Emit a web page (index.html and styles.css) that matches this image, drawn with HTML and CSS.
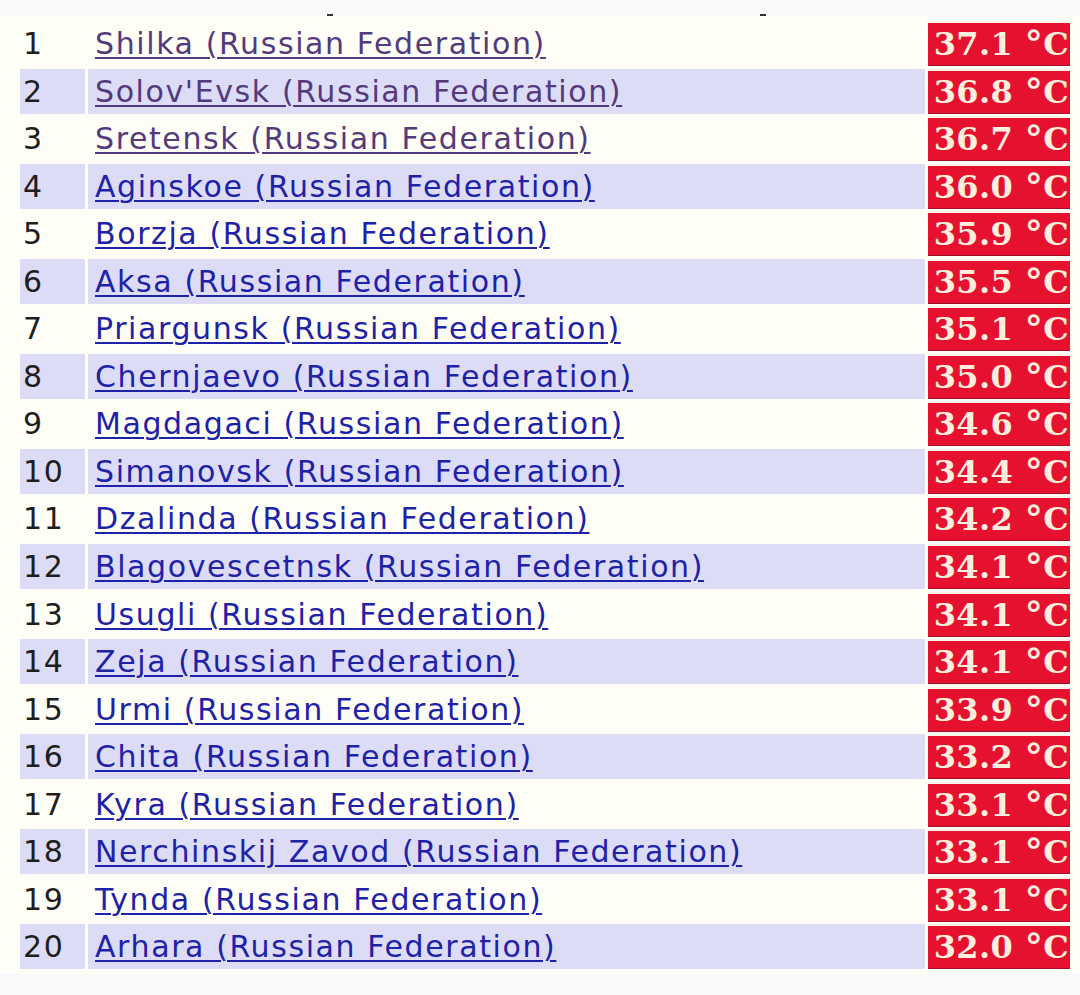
FILE: index.html
```html
<!DOCTYPE html>
<html>
<head>
<meta charset="utf-8">
<link rel="stylesheet" href="styles.css">
</head>
<body>
<div class="page">
  <div class="topstrip"><span class="mark m1"></span><span class="mark m2"></span></div>
  <div class="table">
    <div class="row odd"><div class="num">1</div><div class="name"><a class="visited" href="#">Shilka (Russian Federation)</a></div><div class="temp"><span>37.1 <span class="deg">°</span>C</span></div></div>
    <div class="row even"><div class="num">2</div><div class="name"><a class="visited" href="#">Solov'Evsk (Russian Federation)</a></div><div class="temp"><span>36.8 <span class="deg">°</span>C</span></div></div>
    <div class="row odd"><div class="num">3</div><div class="name"><a class="visited" href="#">Sretensk (Russian Federation)</a></div><div class="temp"><span>36.7 <span class="deg">°</span>C</span></div></div>
    <div class="row even"><div class="num">4</div><div class="name"><a href="#">Aginskoe (Russian Federation)</a></div><div class="temp"><span>36.0 <span class="deg">°</span>C</span></div></div>
    <div class="row odd"><div class="num">5</div><div class="name"><a href="#">Borzja (Russian Federation)</a></div><div class="temp"><span>35.9 <span class="deg">°</span>C</span></div></div>
    <div class="row even"><div class="num">6</div><div class="name"><a href="#">Aksa (Russian Federation)</a></div><div class="temp"><span>35.5 <span class="deg">°</span>C</span></div></div>
    <div class="row odd"><div class="num">7</div><div class="name"><a href="#">Priargunsk (Russian Federation)</a></div><div class="temp"><span>35.1 <span class="deg">°</span>C</span></div></div>
    <div class="row even"><div class="num">8</div><div class="name"><a href="#">Chernjaevo (Russian Federation)</a></div><div class="temp"><span>35.0 <span class="deg">°</span>C</span></div></div>
    <div class="row odd"><div class="num">9</div><div class="name"><a href="#">Magdagaci (Russian Federation)</a></div><div class="temp"><span>34.6 <span class="deg">°</span>C</span></div></div>
    <div class="row even"><div class="num">10</div><div class="name"><a href="#">Simanovsk (Russian Federation)</a></div><div class="temp"><span>34.4 <span class="deg">°</span>C</span></div></div>
    <div class="row odd"><div class="num">11</div><div class="name"><a href="#">Dzalinda (Russian Federation)</a></div><div class="temp"><span>34.2 <span class="deg">°</span>C</span></div></div>
    <div class="row even"><div class="num">12</div><div class="name"><a href="#">Blagovescetnsk (Russian Federation)</a></div><div class="temp"><span>34.1 <span class="deg">°</span>C</span></div></div>
    <div class="row odd"><div class="num">13</div><div class="name"><a href="#">Usugli (Russian Federation)</a></div><div class="temp"><span>34.1 <span class="deg">°</span>C</span></div></div>
    <div class="row even"><div class="num">14</div><div class="name"><a href="#">Zeja (Russian Federation)</a></div><div class="temp"><span>34.1 <span class="deg">°</span>C</span></div></div>
    <div class="row odd"><div class="num">15</div><div class="name"><a href="#">Urmi (Russian Federation)</a></div><div class="temp"><span>33.9 <span class="deg">°</span>C</span></div></div>
    <div class="row even"><div class="num">16</div><div class="name"><a href="#">Chita (Russian Federation)</a></div><div class="temp"><span>33.2 <span class="deg">°</span>C</span></div></div>
    <div class="row odd"><div class="num">17</div><div class="name"><a href="#">Kyra (Russian Federation)</a></div><div class="temp"><span>33.1 <span class="deg">°</span>C</span></div></div>
    <div class="row even"><div class="num">18</div><div class="name"><a href="#">Nerchinskij Zavod (Russian Federation)</a></div><div class="temp"><span>33.1 <span class="deg">°</span>C</span></div></div>
    <div class="row odd"><div class="num">19</div><div class="name"><a href="#">Tynda (Russian Federation)</a></div><div class="temp"><span>33.1 <span class="deg">°</span>C</span></div></div>
    <div class="row even"><div class="num">20</div><div class="name"><a href="#">Arhara (Russian Federation)</a></div><div class="temp"><span>32.0 <span class="deg">°</span>C</span></div></div>
  </div>
</div>
</body>
</html>
```

FILE: styles.css
```css
html, body {
  margin: 0;
  padding: 0;
  background: #f9f9f9;
}
.page {
  width: 1080px;
  height: 995px;
  background: #f9f9f9;
}
.topstrip {
  height: 20px;
  display: flex;
  align-items: flex-end;
  background: linear-gradient(#fafafa 0, #fafafa 15px, #fefef6 15px);
}
.mark {
  display: block;
  width: 6px;
  height: 2px;
  background: #333;
  margin-bottom: 4px;
}
.m1 { margin-left: 327px; }
.m2 { margin-left: 427px; }
.table {
  display: flex;
  flex-direction: column;
  padding-left: 20px;
  padding-right: 10px;
  background: #fefef6;
  padding-top: 1px;
  padding-bottom: 2px;
}
.row {
  display: grid;
  grid-template-columns: 65px 837px 142px;
  column-gap: 3px;
  height: 47.55px;
  font-family: "DejaVu Sans", Verdana, sans-serif;
  font-size: 30px;
  letter-spacing: 1.6px;
}
.row > div {
  height: 45px;
  display: flex;
  align-items: center;
}
.even .num, .even .name {
  background: #dcdcf7;
}
.odd .num, .odd .name {
  background: #fefef6;
}
.num {
  color: #1e1e1e;
  padding-left: 3px;
}
.name {
  padding-left: 7px;
}
.name a {
  color: #1e22a8;
  text-decoration: underline;
  text-decoration-thickness: 2px;
  text-underline-offset: 3px;
}
.name a.visited {
  color: #533a7c;
}
.temp {
  background: #e5112f;
  color: #fdeede;
  font-family: "DejaVu Serif", Georgia, serif;
  font-weight: bold;
  font-size: 32px;
  letter-spacing: 0.4px;
  justify-content: flex-end;
  padding-right: 1px;
  box-sizing: border-box;
  border-top: 2px solid #fdf3ea;
  border-bottom: 1px solid #9e1226;
  white-space: nowrap;
}
.deg {
  font-size: 36px;
  line-height: 0;
  position: relative;
  top: 1px;
}
```
